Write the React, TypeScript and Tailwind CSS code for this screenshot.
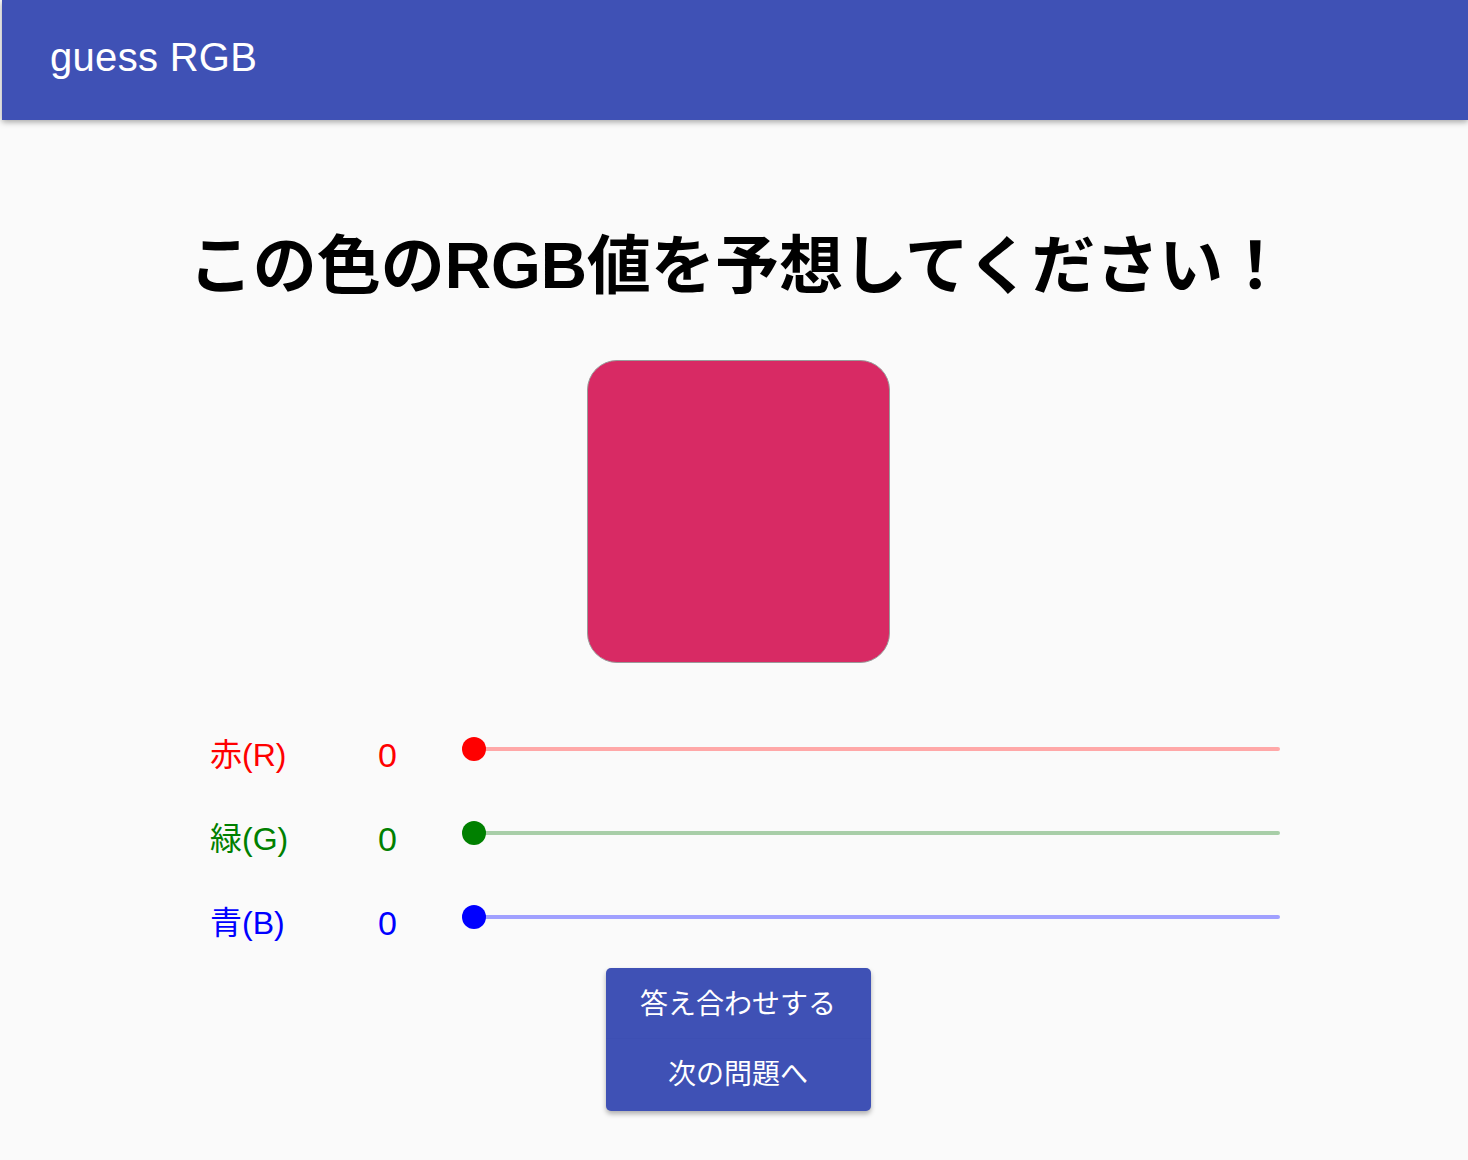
import React from "react";

const rows = [
  { label: "赤(R)", color: "text-[#ff0000]", thumb: "bg-[#ff0000]", track: "bg-[#ffa8a8]" },
  { label: "緑(G)", color: "text-[#008000]", thumb: "bg-[#008000]", track: "bg-[#a8cea8]" },
  { label: "青(B)", color: "text-[#0000ff]", thumb: "bg-[#0000ff]", track: "bg-[#a0a0ff]" },
];

export default function App() {
  return (
    <div
      className="min-h-[1160px] bg-[#fafafa]"
      style={{ fontFamily: '"Liberation Sans", "Noto Sans CJK JP", sans-serif' }}
    >
      <header className="ml-[2px] h-[120px] bg-[#3f51b5] flex items-center pl-[48px] shadow-[0_2px_6px_rgba(0,0,0,0.35)]">
        <span className="text-white text-[40px] tracking-[0.3px] leading-none pb-[6px]">guess RGB</span>
      </header>
      <main className="flex flex-col items-center pl-[8px]">
        <h1 className="mt-[98px] text-[64px] font-bold leading-[96px] text-black">
          この色のRGB値を予想してください！
        </h1>
        <div className="mt-[46px] w-[303px] h-[303px] rounded-[30px] border border-[#9a9a9a] bg-[#d82a64]" />
        <div className="mt-[44px] w-[1070px] self-start ml-[202px] flex flex-col">
          {rows.map((r) => (
            <div key={r.label} className="h-[84px] flex items-center">
              <div className={`w-[168px] text-[32px] leading-none pt-[12px] ${r.color}`}>{r.label}</div>
              <div className={`w-[84px] text-[34px] leading-none pt-[12px] ${r.color}`}>0</div>
              <div className="relative flex-1 h-[24px] flex items-center">
                <div className={`ml-[12px] flex-1 h-[4px] rounded-full ${r.track}`} />
                <div className={`absolute left-0 top-0 w-[24px] h-[24px] rounded-full ${r.thumb}`} />
              </div>
            </div>
          ))}
        </div>
        <div className="mt-[9px] w-[265px] flex flex-col rounded-[5px] bg-[#3f51b5] shadow-[0_3px_5px_rgba(0,0,0,0.3)]">
          <button className="h-[71px] pt-[4px] text-white text-[28px] border-b border-[#3d4fb3]">答え合わせする</button>
          <button className="h-[72px] text-white text-[28px]">次の問題へ</button>
        </div>
      </main>
    </div>
  );
}
